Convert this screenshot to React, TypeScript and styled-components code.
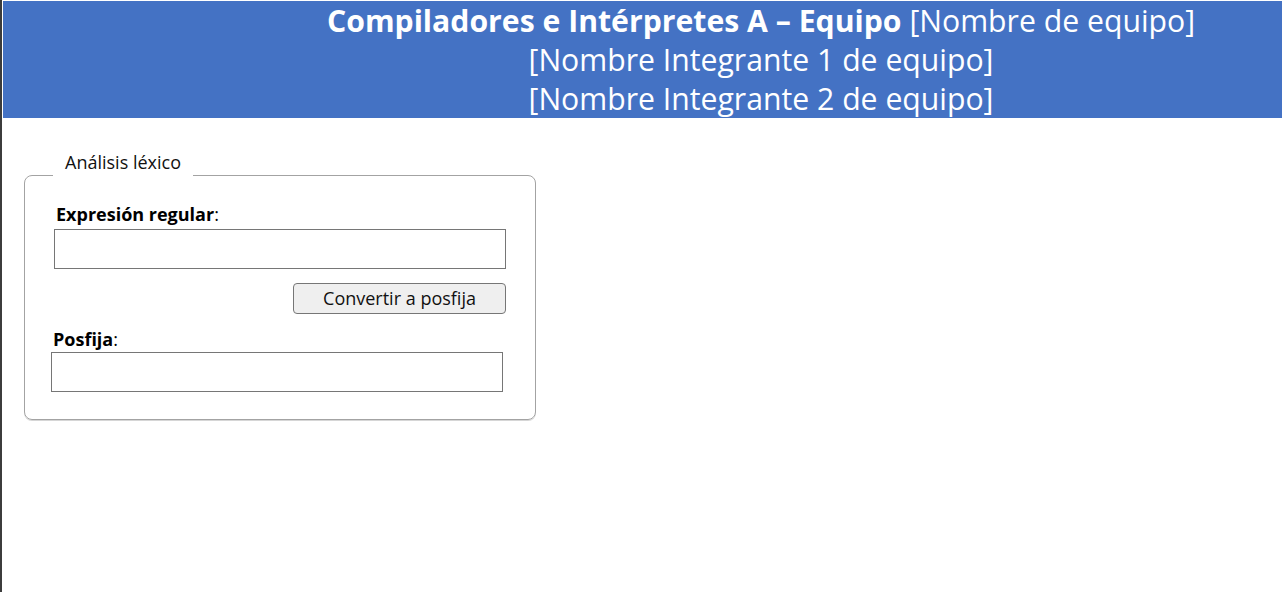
import React from "react";
import styled, { createGlobalStyle } from "styled-components";

const Global = createGlobalStyle`
  html, body { margin: 0; padding: 0; background: #fff; }
  body { font-family: "Open Sans", "Noto Sans", Arial, sans-serif; color: #000; }
`;

const Page = styled.div`
  box-sizing: border-box;
  height: 592px;
  border-left: 2px solid #3c3c3c;
  padding-top: 1px;
  overflow: hidden;
`;

const Header = styled.header`
  margin-left: 1px;
  height: 117px;
  background: #4472c4;
  color: #fff;
  padding-left: 237px;
  text-align: center;
  font-size: 30.2px;
  line-height: 39px;
`;

const Line = styled.div`
  white-space: nowrap;
`;

const Strong = styled.span`
  font-weight: 700;
`;

const Fieldset = styled.fieldset`
  box-sizing: border-box;
  width: 512px;
  margin: 33px 0 0 22px;
  padding: 0 0 27px 0;
  border: 1px solid #a3a3a3;
  border-radius: 8px;
  box-shadow: 0 1px 0 #d6d6d6;
  font-size: 18px;
`;

const Legend = styled.legend`
  margin-left: 28px;
  padding: 0 12px 26px;
  line-height: 23px;
  color: #111;
`;

const Group = styled.div<{ $indent: number; $top?: number }>`
  display: flex;
  flex-direction: column;
  align-items: flex-start;
  margin-left: ${(p) => p.$indent}px;
  margin-top: ${(p) => p.$top ?? 0}px;
  width: 452px;
`;

const Label = styled.label<{ $gap: number }>`
  display: block;
  line-height: 24px;
  padding-left: 2px;
  margin-bottom: ${(p) => p.$gap}px;
  b { font-weight: 700; }
`;

const Input = styled.input`
  box-sizing: border-box;
  width: 452px;
  height: 40px;
  margin: 0;
  border: 1px solid #767676;
  font: inherit;
  outline: none;
`;

const ButtonRow = styled.div`
  display: flex;
  justify-content: flex-end;
  width: 452px;
  margin-top: 14px;
  margin-bottom: 13px;
`;

const Button = styled.button`
  box-sizing: border-box;
  width: 213px;
  height: 31px;
  margin: 0;
  border: 1px solid #767676;
  border-radius: 4px;
  background: #efefef;
  font: inherit;
  color: #111;
  line-height: 29px;
  padding: 0;
`;

export default function App() {
  return (
    <>
      <Global />
      <Page>
        <Header>
          <Line>
            <Strong>Compiladores e Intérpretes A – Equipo</Strong> [Nombre de equipo]
          </Line>
          <Line>[Nombre Integrante 1 de equipo]</Line>
          <Line>[Nombre Integrante 2 de equipo]</Line>
        </Header>
        <Fieldset>
          <Legend>Análisis léxico</Legend>
          <Group $indent={29} $top={2}>
            <Label $gap={3}>
              <b>Expresión regular</b>:
            </Label>
            <Input type="text" />
            <ButtonRow>
              <Button type="button">Convertir a posfija</Button>
            </ButtonRow>
          </Group>
          <Group $indent={26}>
            <Label $gap={1}>
              <b>Posfija</b>:
            </Label>
            <Input type="text" />
          </Group>
        </Fieldset>
      </Page>
    </>
  );
}
